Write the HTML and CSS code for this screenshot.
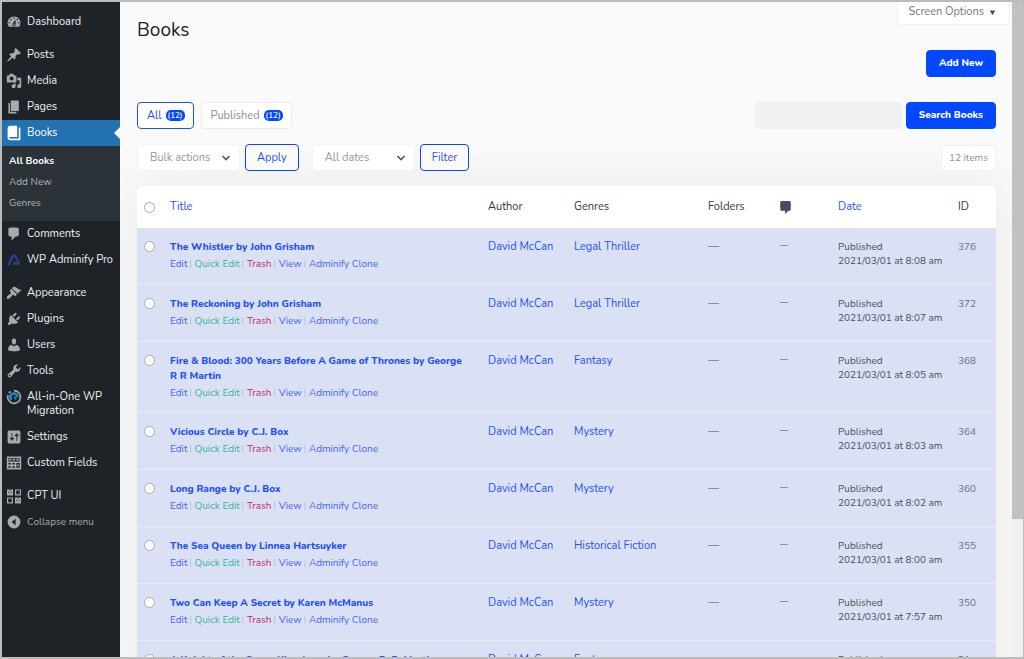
FILE: index.html
```html
<!DOCTYPE html>
<html lang="en">
<head>
  <meta charset="UTF-8">
  <title>Books</title>
  <link rel="stylesheet" href="styles.css">
</head>
<body>
  <div class="layout">
    <nav class="sidebar" aria-label="Main menu">
      <ul class="menu">
        <li><a href="#"><svg viewBox="0 0 20 20"><path d="M3.76 16h12.48A7.998 7.998 0 0 0 10 3a7.998 7.998 0 0 0-6.24 13zM10 4c.55 0 1 .45 1 1s-.45 1-1 1-1-.45-1-1 .45-1 1-1zM6 6c.55 0 1 .45 1 1s-.45 1-1 1-1-.45-1-1 .45-1 1-1zm8 0c.55 0 1 .45 1 1s-.45 1-1 1-1-.45-1-1 .45-1 1-1zm-5.37 5.55L12 7v6c0 1.1-.9 2-2 2s-2-.9-2-2c0-.57.24-1.08.63-1.45zM4 10c.55 0 1 .45 1 1s-.45 1-1 1-1-.45-1-1 .45-1 1-1zm12 0c.55 0 1 .45 1 1s-.45 1-1 1-1-.45-1-1 .45-1 1-1zm-5 3c0-.55-.45-1-1-1s-1 .45-1 1 .45 1 1 1 1-.45 1-1z"/></svg>Dashboard</a></li>
      </ul>
      <ul class="menu">
        <li><a href="#"><svg viewBox="0 0 20 20"><path d="M10.44 3.02l1.82-1.82 6.36 6.35-1.83 1.82c-1.05-.68-2.48-.57-3.41.36l-.75.75c-.92.93-1.04 2.35-.35 3.41l-1.83 1.82-2.41-2.41-2.8 2.79c-.42.42-3.38 2.71-3.8 2.29s1.86-3.39 2.28-3.81l2.79-2.79L4.1 9.36l1.83-1.82c1.05.69 2.48.57 3.4-.36l.75-.75c.93-.92 1.05-2.35.36-3.41z"/></svg>Posts</a></li>
        <li><a href="#"><svg viewBox="0 0 20 20"><path d="M13 11V4c0-.55-.45-1-1-1h-1.67L9 1H5L3.67 3H2c-.55 0-1 .45-1 1v7c0 .55.45 1 1 1h10c.55 0 1-.45 1-1zM7 4.5c1.38 0 2.5 1.12 2.5 2.5S8.38 9.5 7 9.5 4.5 8.38 4.5 7 5.62 4.5 7 4.5zM14 6h5v10.5c0 1.38-1.12 2.5-2.5 2.5S14 17.88 14 16.5s1.12-2.5 2.5-2.5c.17 0 .34.02.5.05V9h-3V6zm-4 8.05V13h2v3.5c0 1.38-1.12 2.5-2.5 2.5S7 17.88 7 16.5 8.12 14 9.5 14c.17 0 .34.02.5.05z"/></svg>Media</a></li>
        <li><a href="#"><svg viewBox="0 0 20 20"><path d="M6 15V2h10v13H6zm-1 1h8v2H3V5h2v11z"/></svg>Pages</a></li>
        <li class="current">
          <a href="#"><svg viewBox="0 0 20 20"><path d="M16 3h2v16H5c-1.66 0-3-1.34-3-3V4c0-1.66 1.34-3 3-3h9v14H5c-.55 0-1 .45-1 1s.45 1 1 1h11V3z"/></svg>Books</a>
          <ul class="submenu">
            <li><a class="active" href="#">All Books</a></li>
            <li><a href="#">Add New</a></li>
            <li><a href="#">Genres</a></li>
          </ul>
        </li>
        <li><a href="#"><svg viewBox="0 0 20 20"><path d="M5 2h9c1.1 0 2 .9 2 2v7c0 1.1-.9 2-2 2h-2l-5 5v-5H5c-1.1 0-2-.9-2-2V4c0-1.1.9-2 2-2z"/></svg>Comments</a></li>
        <li><a href="#"><svg viewBox="0 0 20 20"><path fill="#2b3ea8" d="M2 17C3 12 6 6 8.500 3.500c1-1 2.500-1 3.400.2C14.500 7 17 12 18 16l-3-2C14 10.500 12 7.500 10.300 6 7.500 8.500 5.500 13 5 17z"/><path fill="#3b424d" d="M8 16c1-3 3-4 5-4 2 1 3 3 4 5-3-1-6-1-9-1z"/></svg>WP Adminify Pro</a></li>
      </ul>
      <ul class="menu">
        <li><a href="#"><svg viewBox="0 0 20 20"><path d="M14.48 11.06L7.41 3.99l1.5-1.5c.5-.56 2.3-.47 3.51.32 1.21.8 1.43 1.28 2.91 2.1 1.18.64 2.45 1.26 4.45.85zm-.71.71L6.7 4.7 4.93 6.47c-.39.39-.39 1.02 0 1.41l1.06 1.06c.39.39.39 1.03 0 1.42-.6.6-1.43 1.11-2.21 1.69-.35.26-.7.53-1.01.84C1.43 14.23.4 16.08 1.4 17.07c.99 1 2.84-.03 4.18-1.36.31-.31.58-.66.85-1.02.57-.78 1.08-1.61 1.69-2.21.39-.39 1.02-.39 1.41 0l1.06 1.06c.39.39 1.02.39 1.41 0z"/></svg>Appearance</a></li>
        <li><a href="#"><svg viewBox="0 0 20 20"><path d="M13.11 4.36L9.87 7.6 8 5.73l3.24-3.24c.35-.34 1.05-.2 1.56.32.52.51.66 1.21.31 1.55zm-8 1.77l.91-1.12 9.01 9.01-1.19.84c-.71.71-2.63 1.16-3.82 1.16H6.14L4.9 17.26c-.59.59-1.54.59-2.12 0-.59-.58-.59-1.53 0-2.12l1.24-1.24v-3.88c0-1.13.4-3.19 1.09-3.89zm7.26 3.97l3.24-3.24c.34-.35 1.04-.21 1.55.31.52.51.66 1.21.31 1.55l-3.24 3.25z"/></svg>Plugins</a></li>
        <li><a href="#"><svg viewBox="0 0 20 20"><path d="M10 9.25c-2.27 0-2.73-3.44-2.73-3.44C7 4.02 7.82 2 9.97 2c2.16 0 2.98 2.02 2.71 3.81 0 0-.41 3.44-2.68 3.44zm0 2.57L12.72 10c2.39 0 4.52 2.33 4.52 4.53v2.49s-3.65 1.13-7.24 1.13c-3.65 0-7.24-1.13-7.24-1.13v-2.49c0-2.25 1.94-4.48 4.47-4.48z"/></svg>Users</a></li>
        <li><a href="#"><svg viewBox="0 0 20 20"><path d="M16.68 9.77c-1.34 1.34-3.3 1.67-4.95.99l-5.41 6.52c-.99.99-2.59.99-3.58 0s-.99-2.59 0-3.57l6.52-5.42c-.68-1.65-.35-3.61.99-4.95 1.28-1.28 3.12-1.62 4.72-1.06l-2.89 2.89 2.82 2.82 2.86-2.87c.53 1.58.18 3.39-1.08 4.65zM3.81 16.21c.4.39 1.04.39 1.43 0 .4-.4.4-1.04 0-1.43-.39-.4-1.03-.4-1.43 0-.39.39-.39 1.03 0 1.43z"/></svg>Tools</a></li>
        <li><a href="#"><svg viewBox="0 0 20 20"><g fill="none" stroke-width="2"><path stroke="#a7aaad" d="M10 2a8 8 0 1 1-7.500 5.500"/><path stroke="#a7aaad" d="M3.500 5l2-2"/><path stroke="#1d8fd1" stroke-width="3" d="M7 13.500a4.500 4.500 0 1 1 7.300-3"/><path stroke="#1d8fd1" d="M10 10c1.500 0 2 1 2 3"/></g></svg>All-in-One WP Migration</a></li>
        <li><a href="#"><svg viewBox="0 0 20 20"><path d="M18 16V4c0-1.1-.9-2-2-2H4c-1.1 0-2 .9-2 2v12c0 1.1.9 2 2 2h12c1.1 0 2-.9 2-2zM8 11h1c.55 0 1 .45 1 1s-.45 1-1 1H8v1.5c0 .28-.22.5-.5.5s-.5-.22-.5-.5V13H6c-.55 0-1-.45-1-1s.45-1 1-1h1V5.5c0-.28.22-.5.5-.5s.5.22.5.5V11zm5-2h-1c-.55 0-1-.45-1-1s.45-1 1-1h1V5.5c0-.28.22-.5.5-.5s.5.22.5.5V7h1c.55 0 1 .45 1 1s-.45 1-1 1h-1v5.5c0 .28-.22.5-.5.5s-.5-.22-.5-.5V9z"/></svg>Settings</a></li>
        <li><a href="#"><svg viewBox="0 0 20 20"><path fill-rule="evenodd" d="M1 2h18v16H1zM3 4v4h14V4zM3 10v2h3v-2zM8 10v2h3v-2zM3 14v2h3v-2zM8 14v2h3v-2zM13 10v6h4v-6zM14 12h2v2h-2z"/><path d="M4 5h3v2H4zM8.500 5h3v2h-3zM13 5h3v2h-3z"/></svg>Custom Fields</a></li>
      </ul>
      <ul class="menu">
        <li><a href="#"><svg viewBox="0 0 20 20"><g fill="none" stroke="#a7aaad" stroke-width="1.500"><path d="M2 2.500h6v6H2zM12 2.500h6v6h-6zM2 12.500h6v6H2zM12 12.500h6v6h-6zM2 2.500l6 6M8 2.500l-6 6M12 12.500l6 6M18 12.500l-6 6"/></g></svg>CPT UI</a></li>
        <li><button class="collapse" type="button"><svg viewBox="0 0 20 20"><path fill-rule="evenodd" d="M10 2a8 8 0 1 1 0 16 8 8 0 0 1 0-16zM12 6v8l-5-4z"/></svg>Collapse menu</button></li>
      </ul>
    </nav>

    <main class="content">
      <header class="page-head">
        <h1>Books</h1>
        <button class="screen-options" type="button">Screen Options <svg viewBox="0 0 10 10"><path d="M1 2h8L5 9z"/></svg></button>
      </header>
      <div class="actions-row">
        <a class="btn btn-primary" href="#">Add New</a>
      </div>

      <div class="toolbar views-row">
        <ul class="views">
          <li><a class="active" href="#">All <span class="count">(12)</span></a></li>
          <li><a href="#">Published <span class="count">(12)</span></a></li>
        </ul>
        <form class="search">
          <input type="search" aria-label="Search Books">
          <button class="btn btn-primary" type="button">Search Books</button>
        </form>
      </div>

      <div class="toolbar filters-row">
        <div class="filter">
          <select aria-label="Bulk actions"><option>Bulk actions</option></select>
          <button class="btn btn-outline" type="button">Apply</button>
        </div>
        <div class="filter">
          <select aria-label="Filter by date"><option>All dates</option></select>
          <button class="btn btn-outline" type="button">Filter</button>
        </div>
        <span class="items">12 items</span>
      </div>

      <table class="books">
        <colgroup>
          <col class="col-check"><col><col class="col-author"><col class="col-genres"><col class="col-folders"><col class="col-comments"><col class="col-date"><col class="col-id">
        </colgroup>
        <thead>
          <tr>
            <td class="check"><input type="checkbox" aria-label="Select all"></td>
            <th><a href="#">Title</a></th>
            <th>Author</th>
            <th>Genres</th>
            <th>Folders</th>
            <th><svg class="bubble" viewBox="3 2 13 16" role="img" aria-label="Comments"><path d="M5 2h9c1.100 0 2 .9 2 2v8c0 1.100-.9 2-2 2h-1l-4 4v-4H5c-1.100 0-2-.9-2-2V4c0-1.100.9-2 2-2z"/></svg></th>
            <th><a href="#">Date</a></th>
            <th>ID</th>
          </tr>
        </thead>
        <tbody id="rows"></tbody>
      </table>
    </main>
    <div class="scrollbar"><div class="thumb"></div></div>
  </div>

  <script>
    const books = [
      ["The Whistler by John Grisham", "Legal Thriller", "8:08 am", 376],
      ["The Reckoning by John Grisham", "Legal Thriller", "8:07 am", 372],
      ["Fire & Blood: 300 Years Before A Game of Thrones by George R R Martin", "Fantasy", "8:05 am", 368],
      ["Vicious Circle by C.J. Box", "Mystery", "8:03 am", 364],
      ["Long Range by C.J. Box", "Mystery", "8:02 am", 360],
      ["The Sea Queen by Linnea Hartsuyker", "Historical Fiction", "8:00 am", 355],
      ["Two Can Keep A Secret by Karen McManus", "Mystery", "7:57 am", 350],
      ["A Knight of the Seven Kingdoms by George R. R. Martin", "Fantasy", "7:55 am", 51]
    ];

    document.getElementById("rows").innerHTML = books.map(([title, genre, time, id]) => `
      <tr>
        <td class="check"><input type="checkbox" aria-label="Select ${title.replace("&", "&amp;")}"></td>
        <td>
          <a class="title" href="#">${title.replace("&", "&amp;")}</a>
          <div class="row-actions">
            <a href="#">Edit</a><i>|</i><a class="quick" href="#">Quick Edit</a><i>|</i><a class="trash" href="#">Trash</a><i>|</i><a href="#">View</a><i>|</i><a href="#">Adminify Clone</a>
          </div>
        </td>
        <td><a href="#">David McCan</a></td>
        <td><a href="#">${genre}</a></td>
        <td>—</td>
        <td class="none">—</td>
        <td class="date">Published<br>2021/03/01 at ${time}</td>
        <td class="id">${id}</td>
      </tr>`).join("");
  </script>
</body>
</html>
```

FILE: styles.css
```css
* {
  box-sizing: border-box;
}

body {
  margin: 0;
  height: 100vh;
  overflow: hidden;
  font-family: Nunito, Lato, sans-serif;
  font-size: 11px;
  line-height: 14px;
  color: #4b4f58;
  background-color: #fafafa;
}

a {
  color: #1f50fb;
  text-decoration: none;
}

ul {
  list-style: none;
  margin: 0;
  padding: 0;
}

button,
input,
select {
  font: inherit;
}

.layout {
  display: flex;
  height: 100vh;
  overflow: hidden;
  border: 2px solid #bcbcbc;
  border-right-width: 1px;
}

/* Sidebar */
.sidebar {
  position: relative;
  z-index: 1;
  flex: 0 0 118px;
  padding-top: 7px;
  background-color: #1d2327;
}

.menu + .menu {
  margin-top: 7px;
}

.menu > li > a,
.collapse {
  display: flex;
  align-items: flex-start;
  gap: 5px;
  padding: 6px 4px;
  color: #f0f0f1;
}

.menu svg {
  flex: none;
  width: 16px;
  height: 16px;
  margin: -1px 0;
  fill: #a7aaad;
}

.menu .current > a {
  position: relative;
  background-color: #2271b1;
  color: #fff;
}

.menu .current svg {
  fill: #fff;
}

.current > a::after {
  content: "";
  position: absolute;
  right: 0;
  top: 7px;
  border: 6px solid transparent;
  border-left-width: 0;
  border-right-color: #f5f5f5;
}

.submenu {
  padding: 5px 7px 7px;
  background-color: #2c3338;
}

.submenu a {
  display: block;
  font-size: 10px;
  line-height: 21px;
  color: #b0b4b8;
}

.submenu .active {
  color: #fff;
  font-weight: 700;
}

.collapse {
  width: 100%;
  border: 0;
  background: none;
  font-size: 10px;
  color: #a7aaad;
  text-align: left;
}

/* Page header */
.content {
  flex: 1;
  min-width: 0;
  padding: 0 16px 0 17px;
}

.page-head {
  display: flex;
  justify-content: space-between;
  align-items: flex-start;
}

h1 {
  margin: 18px 0 0;
  font-size: 19px;
  font-weight: 400;
  line-height: 21px;
  color: #1d2327;
}

.screen-options {
  display: flex;
  align-items: center;
  gap: 5px;
  height: 23px;
  margin-right: -14px;
  padding: 0 13px 2px 11px;
  border: 1px solid #f0f0f0;
  border-top: 0;
  border-radius: 0 0 4px 4px;
  background-color: #fff;
  color: #72777c;
}

.screen-options svg {
  width: 7px;
  height: 7px;
  fill: #4b4f58;
}

.actions-row {
  display: flex;
  justify-content: flex-end;
  margin-top: 9px;
}

.btn {
  height: 27px;
  padding: 0 11px;
  border: 1px solid #0347ff;
  border-radius: 4px;
  line-height: 25px;
  white-space: nowrap;
}

.btn-primary {
  padding: 0 12px;
  background-color: #0347ff;
  color: #fff;
  font-size: 10px;
  font-weight: 800;
}

.btn-outline {
  background-color: #fafafa;
  color: #1f50fb;
}

/* Toolbars */
.toolbar {
  display: flex;
  align-items: center;
}

.views-row {
  justify-content: space-between;
  margin-top: 25px;
}

.filters-row {
  gap: 13px;
  margin-top: 15px;
}

.views {
  display: flex;
  gap: 7px;
}

.views a {
  display: flex;
  align-items: center;
  gap: 4px;
  height: 27px;
  padding: 0 8px 0 9px;
  border: 1px solid #ebebeb;
  border-radius: 4px;
  background-color: #fff;
  color: #8a8d93;
}

.views .active {
  border-color: #1f50fb;
  color: #1f50fb;
}

.count {
  padding: 0 2px;
  border-radius: 5px;
  background-color: #0347ff;
  color: #fff;
  font-size: 8px;
  font-weight: 600;
  line-height: 11px;
}

.search {
  display: flex;
  gap: 4px;
}

.search input {
  width: 147px;
  height: 27px;
  border: 0;
  border-radius: 4px;
  background-color: #f1f1f3;
}

.filter {
  display: flex;
  gap: 5px;
}

.filter select {
  width: 103px;
  height: 27px;
  padding: 0 12px;
  border: 1px solid #f4f4f4;
  border-radius: 4px;
  appearance: none;
  color: #95989d;
  background: #fff url("data:image/svg+xml,%3Csvg xmlns='http://www.w3.org/2000/svg' viewBox='0 0 10 10'%3E%3Cpath d='M1.500 3L5 6.500 8.500 3' fill='none' stroke='%23555' stroke-width='1.600'/%3E%3C/svg%3E") no-repeat right 8px center / 10px;
}

.items {
  margin-left: auto;
  padding: 5px 7px;
  border: 1px solid #f2f2f2;
  border-radius: 4px;
  background-color: #fff;
  font-size: 10px;
  color: #8f9297;
}

/* Books table */
.books {
  width: 100%;
  margin-top: 15px;
  table-layout: fixed;
  border-collapse: separate;
  border-spacing: 0;
  border-radius: 5px;
  background-color: #fff;
  box-shadow: 0 0 60px rgba(0, 0, 0, 0.08);
}

.col-check { width: 23px; }
.col-author { width: 86px; }
.col-genres { width: 134px; }
.col-folders { width: 72px; }
.col-comments { width: 58px; }
.col-date { width: 120px; }
.col-id { width: 48px; }

.books th,
.books td {
  padding: 0 0 0 10px;
  text-align: left;
  vertical-align: top;
}

.books thead th,
.books thead td {
  height: 42px;
  vertical-align: middle;
  font-weight: 400;
  color: #32373c;
}

.books tbody tr {
  background-color: #dbe1f5;
}

.books tbody td {
  height: 57px;
  padding-top: 12px;
  padding-bottom: 12px;
  border-bottom: 1px solid #e9edf8;
}

.books .check {
  padding-left: 7px;
}

.check input {
  display: block;
  appearance: none;
  width: 11px;
  height: 11px;
  margin: 1px 0;
  border: 1px solid #a9acb3;
  border-radius: 50%;
  background-color: #fff;
}

.title {
  display: block;
  padding-right: 12px;
  font-size: 10px;
  font-weight: 800;
  line-height: 15px;
}

.row-actions {
  display: flex;
  margin-top: 2px;
  font-size: 10px;
  white-space: nowrap;
}

.row-actions a {
  color: #4263fb;
}

.row-actions i {
  margin: 0 3px 0 2px;
  font-size: 8px;
  font-style: normal;
  color: #b3b9cb;
}

.row-actions .quick {
  color: #36b595;
}

.row-actions .trash {
  color: #c22a66;
}

.bubble {
  display: block;
  width: 11px;
  height: 13px;
  fill: #4c4a63;
}

.books .none {
  font-size: 8px;
  line-height: 12px;
}

.books .date,
.books .id {
  font-size: 10px;
}

.books .id {
  color: #6b7080;
}

/* Scrollbar */
.scrollbar {
  position: relative;
  flex: 0 0 11px;
  background-color: #f0f0f0;
}

.thumb {
  height: 79%;
  background-color: #c1c1c1;
}
```
